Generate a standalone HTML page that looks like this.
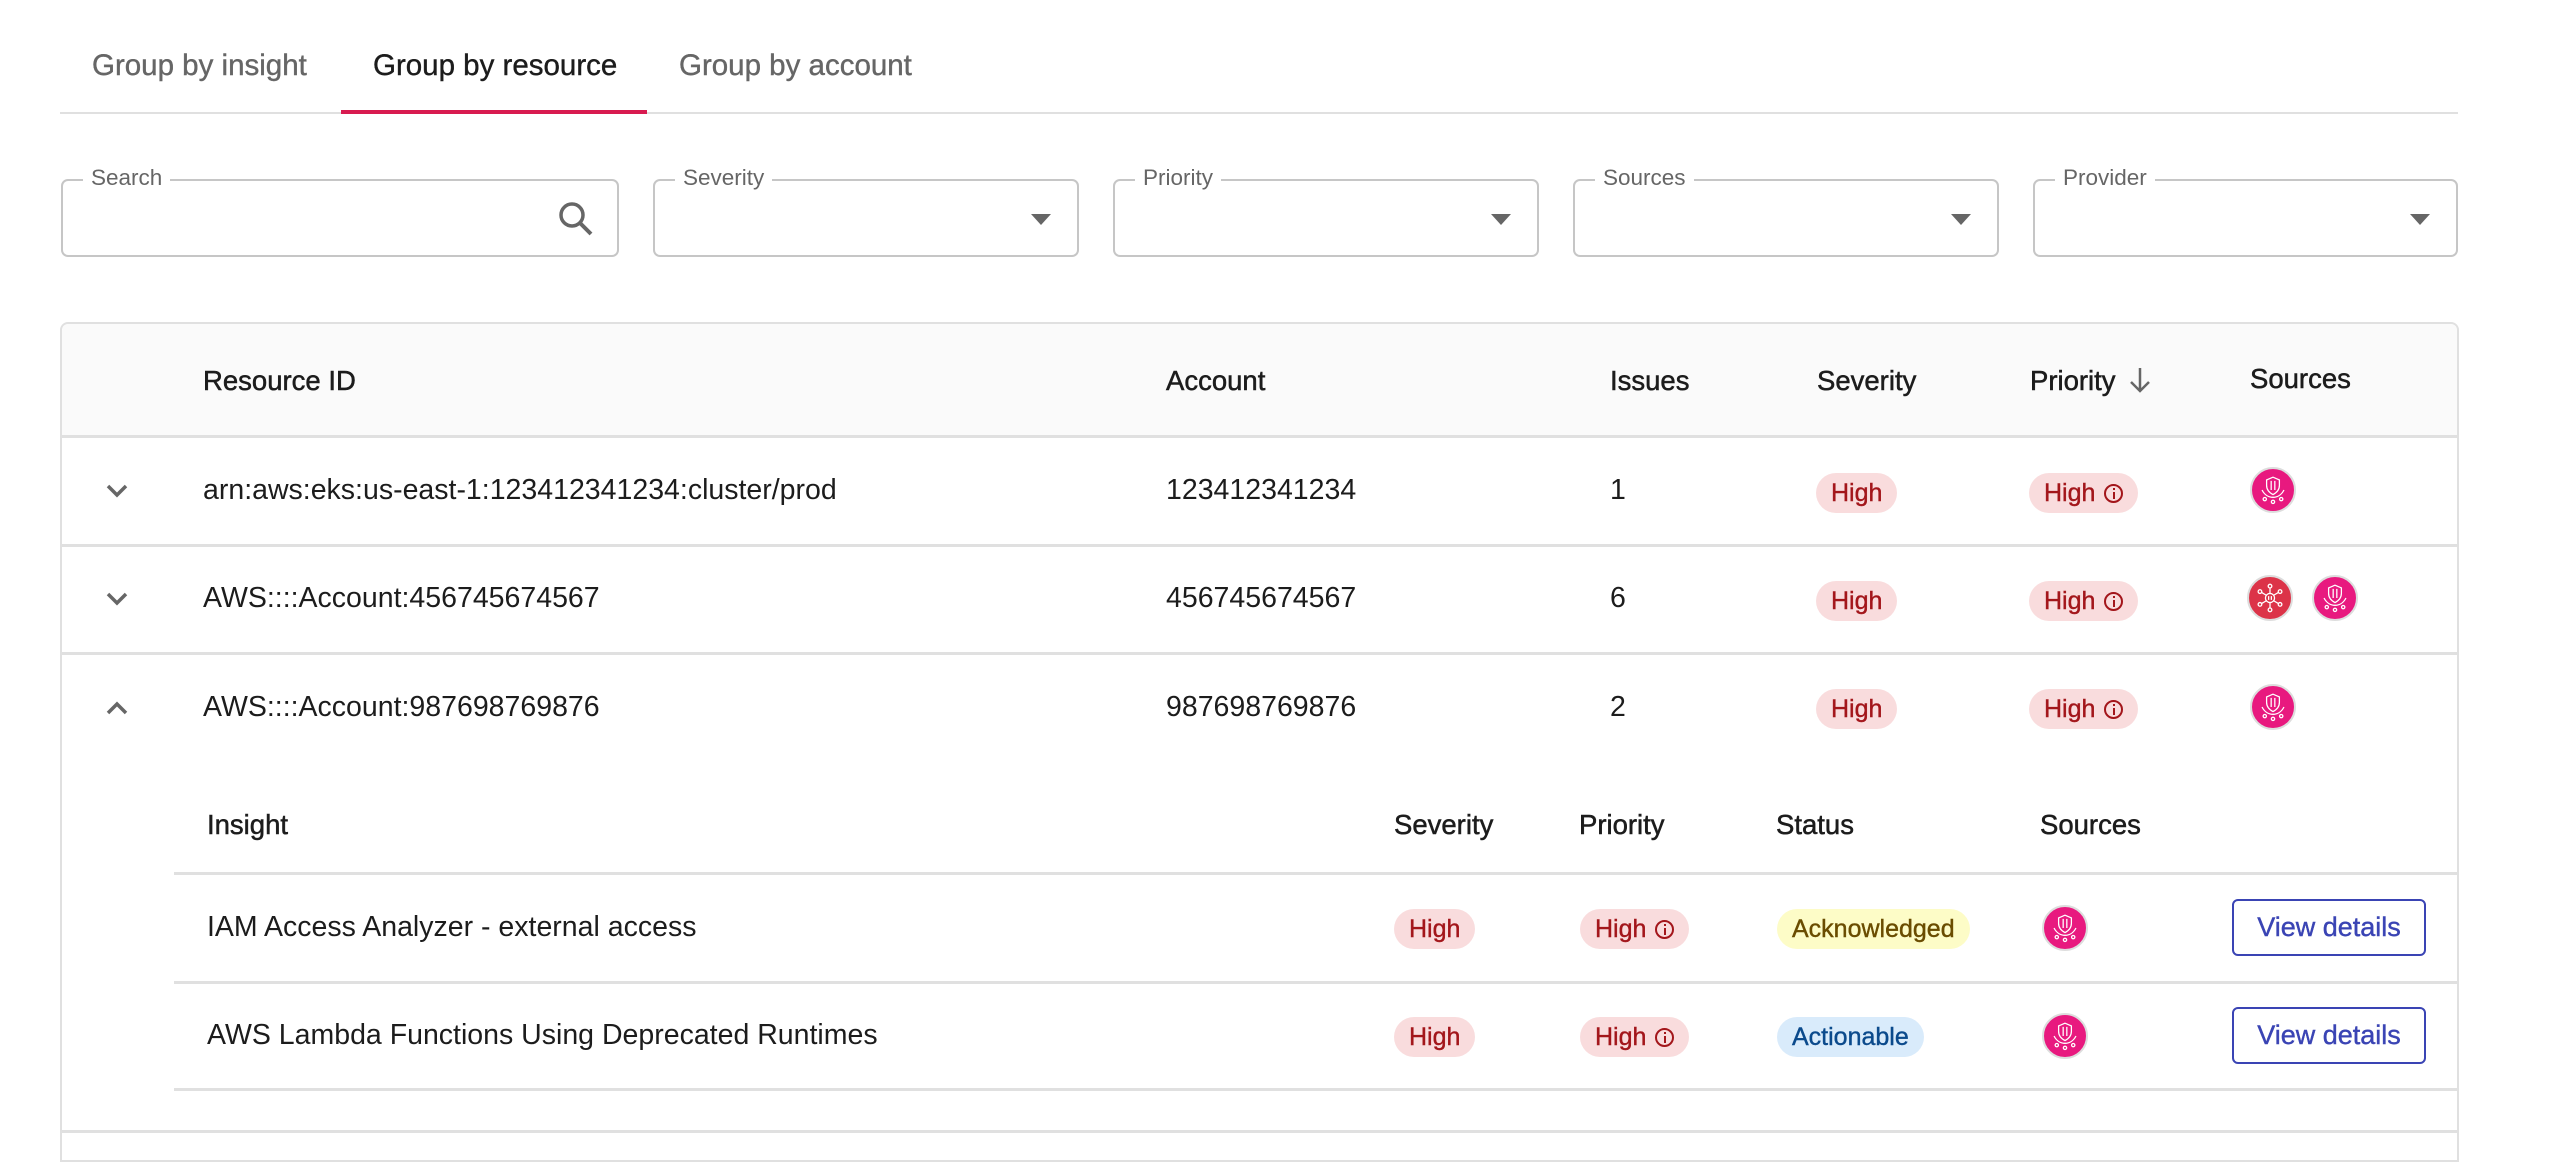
<!DOCTYPE html>
<html><head><meta charset="utf-8"><style>
*{box-sizing:border-box;margin:0;padding:0}
body{width:2554px;height:1150px;background:#fff;font-family:"Liberation Sans",sans-serif;color:#1c1c1c;position:relative;overflow:hidden}
.a{position:absolute;white-space:nowrap}
.tab{font-size:29.5px;color:#666;top:49px;-webkit-text-stroke:0.4px currentColor}
.box{position:absolute;top:179px;height:78px;border:2px solid #c6c6c6;border-radius:7px}
.lbl{position:absolute;top:-16px;left:20px;background:#fff;padding:0 8px;font-size:22.5px;color:#666}
.arr{position:absolute;right:26px;top:33px;width:0;height:0;border-left:10px solid transparent;border-right:10px solid transparent;border-top:11px solid #666}
.hd{font-size:27.5px;color:#1c1c1c;-webkit-text-stroke:0.5px #1c1c1c}
.tx{font-size:28.5px;color:#1c1c1c}
.line{position:absolute;height:3px;background:#e0e0e0}
.pill{position:absolute;height:40px;border-radius:20px;font-size:25px;line-height:40px;padding:0 15px;white-space:nowrap;-webkit-text-stroke:0.4px currentColor}
.hi{background:#f9dcdd;color:#a3161b}
.ic{display:inline-block;width:19px;height:19px;border:2px solid #a3161b;border-radius:50%;vertical-align:-2px;margin-left:9px;position:relative;-webkit-text-stroke:0}
.ic:after{content:"";position:absolute;left:6.5px;top:6px;width:2px;height:7px;background:#a3161b}
.ic:before{content:"";position:absolute;left:6.5px;top:2px;width:2px;height:2px;background:#a3161b}
.src{position:absolute;width:46px;height:46px;border-radius:50%;border:2px solid #ddd}
.chev{position:absolute;left:106px;width:22px;height:14px}
.btn{position:absolute;left:2232px;width:194px;height:57px;border:2px solid #3a44b4;border-radius:6px;color:#3a44b4;font-size:27px;text-align:center;line-height:53px;-webkit-text-stroke:0.4px #3a44b4}
</style></head><body>
<div class="a tab" style="left:92px">Group by insight</div>
<div class="a tab" style="left:373px;color:#1c1c1c">Group by resource</div>
<div class="a tab" style="left:679px">Group by account</div>
<div class="line" style="left:60px;width:2398px;top:112px;height:2px"></div>
<div class="a" style="left:341px;top:110px;width:306px;height:4px;background:#d81b50"></div>

<div class="box" style="left:61px;width:558px"><span class="lbl">Search</span>
<svg class="a" style="left:494px;top:19px" width="38" height="38" viewBox="0 0 38 38"><circle cx="15" cy="15" r="11" fill="none" stroke="#666" stroke-width="3.5"/><line x1="23" y1="23" x2="34" y2="34" stroke="#666" stroke-width="4"/></svg></div>
<div class="box" style="left:653px;width:426px"><span class="lbl">Severity</span><div class="arr"></div></div>
<div class="box" style="left:1113px;width:426px"><span class="lbl">Priority</span><div class="arr"></div></div>
<div class="box" style="left:1573px;width:426px"><span class="lbl">Sources</span><div class="arr"></div></div>
<div class="box" style="left:2033px;width:425px"><span class="lbl">Provider</span><div class="arr"></div></div>

<div class="a" style="left:60px;top:322px;width:2399px;height:840px;border:2px solid #e0e0e0;border-radius:8px 8px 0 0"></div>
<div class="a" style="left:62px;top:324px;width:2395px;height:112px;background:#fafafa;border-radius:7px 7px 0 0"></div>
<div class="a hd" style="left:203px;top:365px">Resource ID</div>
<div class="a hd" style="left:1166px;top:365px">Account</div>
<div class="a hd" style="left:1610px;top:365px">Issues</div>
<div class="a hd" style="left:1817px;top:365px">Severity</div>
<div class="a hd" style="left:2030px;top:365px">Priority <svg width="26" height="28" viewBox="0 0 26 28" style="vertical-align:-4px;margin-left:4px"><path d="M13 2V25M4 16l9 9 9-9" fill="none" stroke="#666" stroke-width="2.5"/></svg></div>
<div class="a hd" style="left:2250px;top:363px">Sources</div>
<div class="line" style="left:62px;width:2395px;top:435px"></div>
<div class="line" style="left:62px;width:2395px;top:544px"></div>
<div class="line" style="left:62px;width:2395px;top:652px"></div>
<div class="line" style="left:174px;width:2283px;top:872px"></div>
<div class="line" style="left:174px;width:2283px;top:981px"></div>
<div class="line" style="left:174px;width:2283px;top:1088px"></div>
<div class="line" style="left:62px;width:2395px;top:1130px"></div>

<svg class="chev" style="top:484px" viewBox="0 0 22 14"><path d="M2 2l9 9 9-9" fill="none" stroke="#666" stroke-width="3.5"/></svg>
<svg class="chev" style="top:592px" viewBox="0 0 22 14"><path d="M2 2l9 9 9-9" fill="none" stroke="#666" stroke-width="3.5"/></svg>
<svg class="chev" style="top:701px" viewBox="0 0 22 14"><path d="M2 12l9-9 9 9" fill="none" stroke="#666" stroke-width="3.5"/></svg>

<div class="a tx" style="left:203px;top:474px">arn:aws:eks:us-east-1:123412341234:cluster/prod</div>
<div class="a tx" style="left:1166px;top:474px">123412341234</div>
<div class="a tx" style="left:1610px;top:474px">1</div>
<div class="pill hi" style="left:1816px;top:473px">High</div>
<div class="pill hi" style="left:2029px;top:473px">High<span class="ic"></span></div>

<div class="a tx" style="left:203px;top:582px">AWS::::Account:456745674567</div>
<div class="a tx" style="left:1166px;top:582px">456745674567</div>
<div class="a tx" style="left:1610px;top:582px">6</div>
<div class="pill hi" style="left:1816px;top:581px">High</div>
<div class="pill hi" style="left:2029px;top:581px">High<span class="ic"></span></div>

<div class="a tx" style="left:203px;top:691px">AWS::::Account:987698769876</div>
<div class="a tx" style="left:1166px;top:691px">987698769876</div>
<div class="a tx" style="left:1610px;top:691px">2</div>
<div class="pill hi" style="left:1816px;top:689px">High</div>
<div class="pill hi" style="left:2029px;top:689px">High<span class="ic"></span></div>

<svg width="0" height="0" style="position:absolute"><defs>
<g id="sh" fill="none" stroke="#fff" stroke-width="1.4"><path d="M23 9l7 3v6c0 5-3 8-7 10-4-2-7-5-7-10v-6z"/><path d="M21 13v10M25 13v10"/><path d="M11 23c3 6 8 8 12 8s9-2 12-8"/><circle cx="14" cy="33" r="1.8"/><circle cx="23" cy="36" r="1.8"/><circle cx="32" cy="33" r="1.8"/></g>
<g id="hub" fill="none" stroke="#fff" stroke-width="1.4"><circle cx="23" cy="23" r="5"/><path d="M21.5 21v4M24.5 21v4"/><circle cx="23" cy="10" r="2"/><circle cx="23" cy="36" r="2"/><circle cx="12" cy="16" r="2"/><circle cx="34" cy="16" r="2"/><circle cx="12" cy="30" r="2"/><circle cx="34" cy="30" r="2"/><path d="M23 12v6M23 28v6M14 17l5 3M32 17l-5 3M14 29l5-3M32 29l-5-3"/></g></defs></svg>

<svg class="src" style="left:2250px;top:467px;background:#e8197f" viewBox="0 0 46 46"><use href="#sh"/></svg>
<svg class="src" style="left:2247px;top:575px;background:#dc3348" viewBox="0 0 46 46"><use href="#hub"/></svg>
<svg class="src" style="left:2312px;top:575px;background:#e8197f" viewBox="0 0 46 46"><use href="#sh"/></svg>
<svg class="src" style="left:2250px;top:684px;background:#e8197f" viewBox="0 0 46 46"><use href="#sh"/></svg>

<div class="a hd" style="left:207px;top:809px">Insight</div>
<div class="a hd" style="left:1394px;top:809px">Severity</div>
<div class="a hd" style="left:1579px;top:809px">Priority</div>
<div class="a hd" style="left:1776px;top:809px">Status</div>
<div class="a hd" style="left:2040px;top:809px">Sources</div>

<div class="a tx" style="left:207px;top:911px">IAM Access Analyzer - external access</div>
<div class="pill hi" style="left:1394px;top:909px">High</div>
<div class="pill hi" style="left:1580px;top:909px">High<span class="ic"></span></div>
<div class="pill" style="left:1777px;top:909px;background:#fdfcc7;color:#6a4c00">Acknowledged</div>
<svg class="src" style="left:2042px;top:905px;background:#e8197f" viewBox="0 0 46 46"><use href="#sh"/></svg>
<div class="btn" style="top:899px">View details</div>

<div class="a tx" style="left:207px;top:1019px">AWS Lambda Functions Using Deprecated Runtimes</div>
<div class="pill hi" style="left:1394px;top:1017px">High</div>
<div class="pill hi" style="left:1580px;top:1017px">High<span class="ic"></span></div>
<div class="pill" style="left:1777px;top:1017px;background:#d9ebfb;color:#0b4a8c">Actionable</div>
<svg class="src" style="left:2042px;top:1013px;background:#e8197f" viewBox="0 0 46 46"><use href="#sh"/></svg>
<div class="btn" style="top:1007px">View details</div>
</body></html>
